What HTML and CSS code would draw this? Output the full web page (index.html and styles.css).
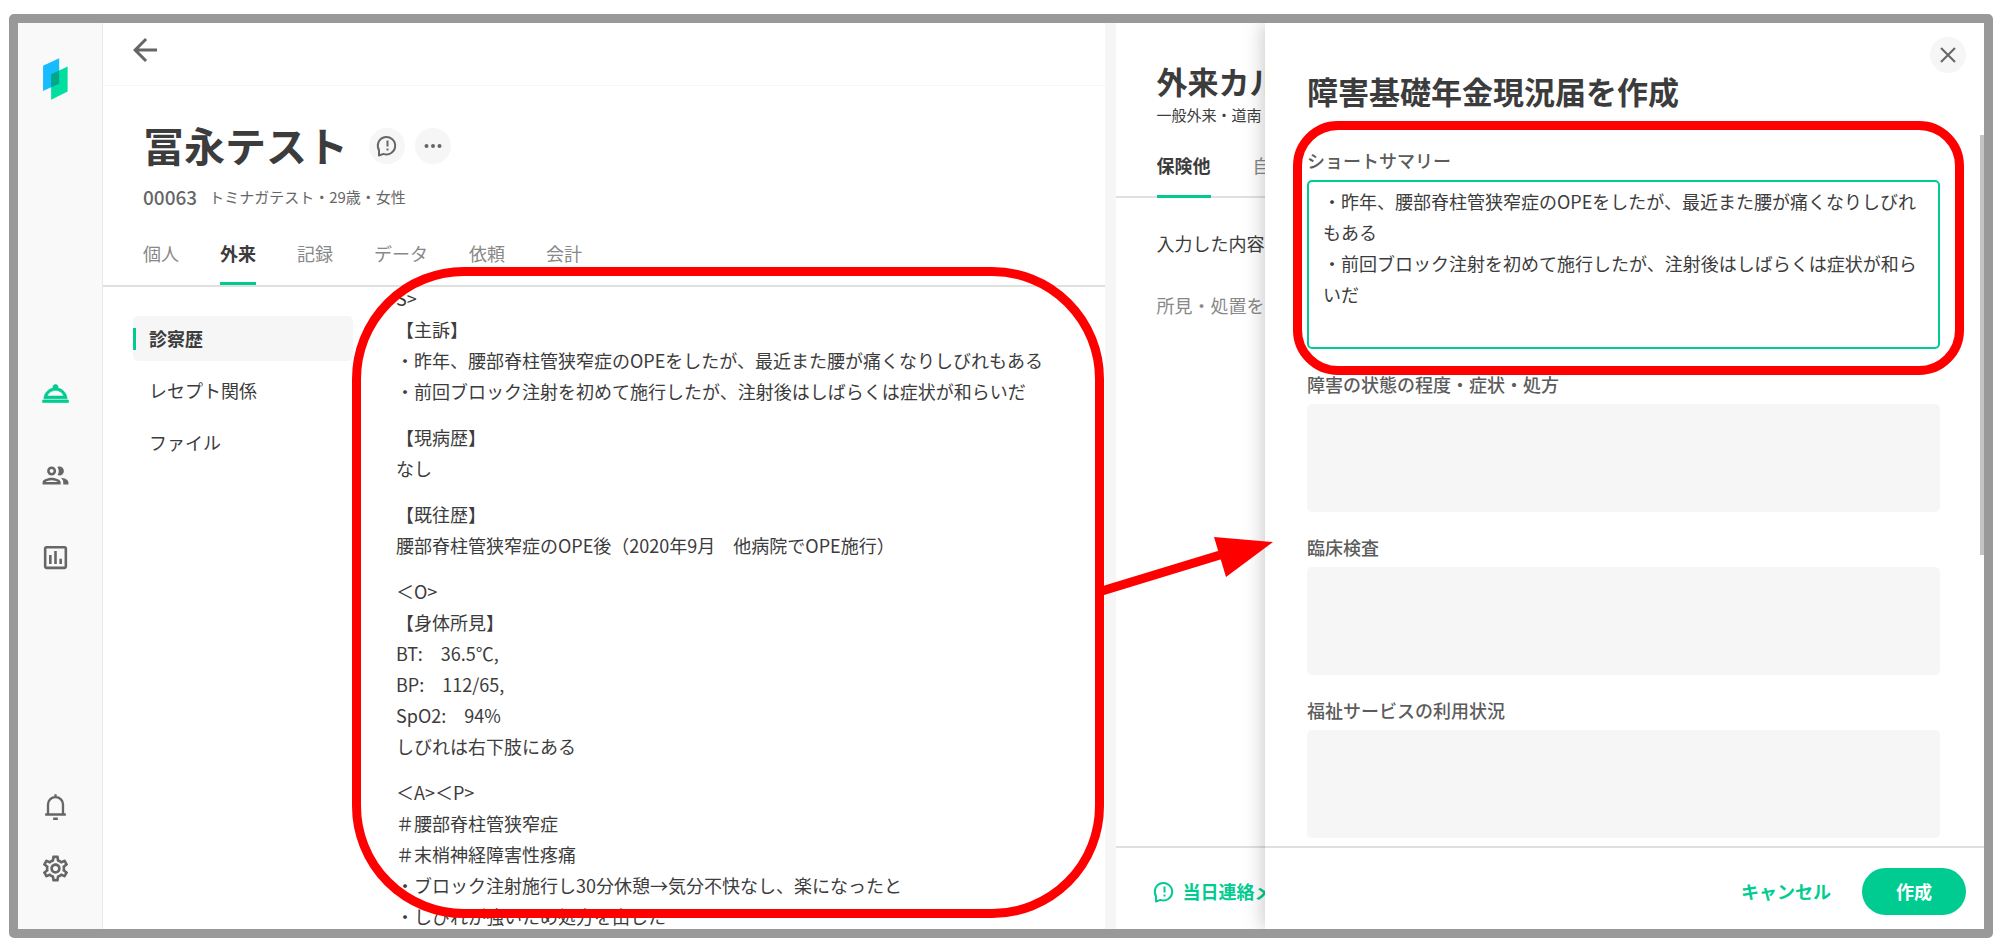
FILE: index.html
```html
<!DOCTYPE html>
<html lang="ja">
<head>
<meta charset="utf-8">
<meta name="viewport" content="width=device-width, initial-scale=1">
<title>障害基礎年金現況届を作成</title>
<link rel="stylesheet" href="styles.css">
</head>
<body>
<div class="frame">
  <nav class="rail" aria-label="メイン">
    <svg class="logo" viewBox="130 174 74 125" aria-hidden="true">
      <path fill="#15bdff" d="M130 197l48-22v75l-48 22z"/>
      <path fill="#00dfa0" d="M154 222l49-23v75l-49 24z"/>
      <path fill="#00a78b" d="M154 222l24-11v39l-24 12z"/>
    </svg>
    <div class="rail-group rail-main">
      <a class="rail-link active" href="#reception" aria-label="受付"><svg class="icon" viewBox="0 0 24 24"><path stroke="currentColor" stroke-width=".5" d="M2 17h20v2H2zm11.84-9.21c.1-.24.16-.51.16-.79 0-1.1-.9-2-2-2s-2 .9-2 2c0 .28.06.55.16.79C6.25 8.6 3.27 11.93 3 16h18c-.27-4.07-3.25-7.4-7.16-8.21zM12 9.58c2.95 0 5.47 1.83 6.5 4.41h-13c1.03-2.58 3.55-4.41 6.5-4.41z"/></svg></a>
      <a class="rail-link" href="#patients" aria-label="患者"><svg class="icon" viewBox="0 0 24 24"><path d="M9 13.75c-2.34 0-7 1.17-7 3.5V19h14v-1.75c0-2.33-4.66-3.5-7-3.5zM4.34 17c.84-.58 2.87-1.25 4.66-1.25s3.82.67 4.66 1.25H4.34zM9 12c1.93 0 3.5-1.57 3.5-3.5S10.93 5 9 5 5.5 6.57 5.5 8.5 7.07 12 9 12zm0-5c.83 0 1.5.67 1.5 1.5S9.83 10 9 10s-1.5-.67-1.5-1.5S8.17 7 9 7zm7.04 6.81c1.16.84 1.96 1.96 1.96 3.44V19h4v-1.75c0-2.02-3.5-3.17-5.96-3.44zM15 12c1.93 0 3.5-1.57 3.5-3.5S16.93 5 15 5c-.54 0-1.04.13-1.5.35.63.89 1 1.98 1 3.15s-.37 2.26-1 3.15c.46.22.96.35 1.5.35z"/></svg></a>
      <a class="rail-link" href="#report" aria-label="レポート"><svg class="icon" viewBox="0 0 24 24"><path d="M9 17H7v-7h2v7zm4 0h-2V7h2v10zm4 0h-2v-4h2v4zm2 2H5V5h14v14zm0-16H5c-1.1 0-2 .9-2 2v14c0 1.1.9 2 2 2h14c1.1 0 2-.9 2-2V5c0-1.1-.9-2-2-2z"/></svg></a>
    </div>
    <div class="rail-group rail-tools">
      <button class="rail-link" type="button" aria-label="通知"><svg class="icon line" viewBox="0 0 24 24"><path d="M4 18.2h16M6.200 18V10.500c0-3.200 2.300-5.700 5.800-5.700s5.800 2.500 5.800 5.700V18M12 2.500V5M10.200 21.500h3.600"/></svg></button>
      <button class="rail-link" type="button" aria-label="設定"><svg class="icon" viewBox="0 0 24 24"><path d="M19.43 12.98c.04-.32.07-.64.07-.98 0-.34-.03-.66-.07-.98l2.110-1.650c.19-.15.24-.42.12-.64l-2-3.460c-.09-.16-.26-.25-.44-.25-.06 0-.12.01-.17.03l-2.490 1c-.52-.4-1.080-.73-1.690-.98l-.38-2.650C14.46 2.18 14.25 2 14 2h-4c-.25 0-.46.18-.49.42l-.38 2.650c-.61.25-1.170.59-1.690.98l-2.490-1c-.06-.02-.12-.03-.18-.03-.17 0-.34.09-.43.25l-2 3.460c-.13.22-.07.49.12.64l2.110 1.650c-.04.32-.07.65-.07.98 0 .33.03.66.07.98l-2.110 1.650c-.19.15-.24.42-.12.64l2 3.460c.09.16.26.25.44.25.06 0 .12-.01.17-.03l2.490-1c.52.4 1.080.73 1.690.98l.38 2.650c.03.24.24.42.49.42h4c.25 0 .46-.18.49-.42l.38-2.650c.61-.25 1.170-.59 1.690-.98l2.490 1c.06.02.12.03.18.03.17 0 .34-.09.43-.25l2-3.460c.12-.22.07-.49-.12-.64l-2.110-1.650zm-1.980-1.710c.04.31.05.52.05.73 0 .21-.02.43-.05.73l-.14 1.130.89.7 1.080.84-.7 1.210-1.270-.51-1.040-.42-.9.68c-.43.32-.84.56-1.250.73l-1.060.43-.16 1.130-.2 1.350h-1.400l-.19-1.350-.16-1.130-1.060-.43c-.43-.18-.83-.41-1.230-.71l-.91-.7-1.060.43-1.270.51-.7-1.210 1.080-.84.89-.7-.14-1.130c-.03-.31-.05-.54-.05-.74s.02-.43.05-.73l.14-1.130-.89-.7-1.080-.84.7-1.210 1.270.51 1.040.42.9-.68c.43-.32.84-.56 1.250-.73l1.060-.43.16-1.130.2-1.350h1.390l.19 1.350.16 1.130 1.060.43c.43.18.83.41 1.230.71l.91.7 1.060-.43 1.270-.51.7 1.210-1.070.85-.89.7.14 1.130zM12 8c-2.210 0-4 1.790-4 4s1.790 4 4 4 4-1.790 4-4-1.790-4-4-4zm0 6c-1.100 0-2-.9-2-2s.9-2 2-2 2 .9 2 2-.9 2-2 2z"/></svg></button>
    </div>
  </nav>

  <main class="patient">
    <header class="topbar">
      <button class="back" type="button" aria-label="戻る"><svg viewBox="0 0 24 24"><path d="M20 11H7.830l5.590-5.590L12 4l-8 8 8 8 1.410-1.410L7.830 13H20v-2z"/></svg></button>
    </header>
    <section class="patient-head">
      <div class="name-row">
        <h1>冨永テスト</h1>
        <div class="name-actions">
          <button class="round" type="button" aria-label="連絡メモ"><svg class="bubble" viewBox="0 0 24 24"><path d="M4 21.500V16.200A8.700 8.700 0 1 1 8.500 19.900Z"/><path d="M12.500 6.500v6M12.500 14.500v2"/></svg></button>
          <button class="round" type="button" aria-label="その他"><svg class="dots" viewBox="0 0 18 6"><circle cx="2.500" cy="3" r="2"/><circle cx="9" cy="3" r="2"/><circle cx="15.500" cy="3" r="2"/></svg></button>
        </div>
      </div>
      <p class="meta"><span class="pid">00063</span><span>トミナガテスト・29歳・女性</span></p>
    </section>
    <nav class="tabs" aria-label="患者情報">
      <a href="#personal">個人</a><a class="active" href="#outpatient">外来</a><a href="#record">記録</a><a href="#data">データ</a><a href="#order">依頼</a><a href="#account">会計</a>
    </nav>
    <div class="chart">
      <nav class="menu" aria-label="外来">
        <a class="active" href="#history">診察歴</a>
        <a href="#receipt">レセプト関係</a>
        <a href="#files">ファイル</a>
      </nav>
      <article class="note">
        <p>S&gt;<br>【主訴】<br>・昨年、腰部脊柱管狭窄症のOPEをしたが、最近また腰が痛くなりしびれもある<br>・前回ブロック注射を初めて施行したが、注射後はしばらくは症状が和らいだ</p>
        <p>【現病歴】<br>なし</p>
        <p>【既往歴】<br>腰部脊柱管狭窄症のOPE後（2020年9月　他病院でOPE施行）</p>
        <p>＜O&gt;<br>【身体所見】<br>BT:　36.5℃,<br>BP:　112/65,<br>SpO2:　94%<br>しびれは右下肢にある</p>
        <p>＜A&gt;＜P&gt;<br>＃腰部脊柱管狭窄症<br>＃末梢神経障害性疼痛<br>・ブロック注射施行し30分休憩→気分不快なし、楽になったと<br>・しびれが強いため処方を出した</p>
      </article>
    </div>
    <div class="mark mark-note"></div>
  </main>

  <section class="karte">
    <h2>外来カルテ</h2>
    <p class="karte-sub">一般外来・道南</p>
    <nav class="karte-tabs" aria-label="カルテ"><a class="active" href="#insured">保険他</a><a href="#self">自費</a></nav>
    <div class="karte-body">
      <p>入力した内容</p>
      <p class="hint">所見・処置を</p>
    </div>
    <footer class="karte-foot">
      <button type="button"><svg class="bubble" viewBox="0 0 24 24"><path d="M4 21.500V16.200A8.700 8.700 0 1 1 8.500 19.900Z"/><path d="M12.500 6.500v6M12.500 14.500v2"/></svg>当日連絡メモ</button>
    </footer>
  </section>

  <aside class="drawer" aria-labelledby="drawer-title">
    <header class="drawer-head">
      <h2 id="drawer-title">障害基礎年金現況届を作成</h2>
      <button class="round close" type="button" aria-label="閉じる"><svg viewBox="0 0 16 16"><path d="M1 1l14 14M15 1L1 15"/></svg></button>
    </header>
    <form class="drawer-body">
      <div class="field focus">
        <label for="summary">ショートサマリー</label>
        <textarea id="summary">・昨年、腰部脊柱管狭窄症のOPEをしたが、最近また腰が痛くなりしびれもある
・前回ブロック注射を初めて施行したが、注射後はしばらくは症状が和らいだ</textarea>
        <div class="mark mark-field"></div>
      </div>
      <div class="field"><label for="state">障害の状態の程度・症状・処方</label><textarea id="state"></textarea></div>
      <div class="field"><label for="exam">臨床検査</label><textarea id="exam"></textarea></div>
      <div class="field"><label for="welfare">福祉サービスの利用状況</label><textarea id="welfare"></textarea></div>
      <div class="thumb"></div>
    </form>
    <footer class="drawer-foot">
      <button class="cancel" type="button">キャンセル</button>
      <button class="submit" type="button">作成</button>
    </footer>
  </aside>

  <svg class="arrow" viewBox="0 0 172 60" aria-hidden="true"><path d="M0 54l118-36" stroke="#f00" stroke-width="9"/><path fill="#f00" d="M112 0l59 5-47 35z"/></svg>
</div>
</body>
</html>
```

FILE: styles.css
```css
:root {
  --green: #00cc92;
  --ink: #3c3c3c;
  --mid: #666;
  --soft: #888;
  --fill: #f6f6f6;
  --rule: #e0e0e0;
}

* { box-sizing: border-box; }

body {
  margin: 0;
  height: 100vh;
  padding: 14px 7px 7px 9px;
  background: #fff;
  color: var(--ink);
  font: 18px/31px "Noto Sans CJK JP", sans-serif;
}

h1, h2, p { margin: 0; }
a { color: inherit; text-decoration: none; }
button {
  padding: 0;
  border: 0;
  background: none;
  color: inherit;
  font: inherit;
  cursor: pointer;
}
svg { display: block; }

.frame {
  position: relative;
  display: flex;
  height: 100%;
  overflow: hidden;
  border: 9px solid #999;
  border-radius: 5px;
}

/* Left rail */
.rail {
  flex: none;
  display: flex;
  flex-direction: column;
  align-items: center;
  width: 85px;
  padding: 35px 10px 45px 0;
  border-right: 1px solid #e8e8e8;
  background: #f9f9f9;
  color: var(--mid);
}
.logo { width: 25px; height: 42px; }
.rail-group { display: flex; flex-direction: column; }
.rail-main { gap: 51px; margin-top: 278px; }
.rail-tools { gap: 31px; margin-top: auto; }
.rail-link.active { color: var(--green); }
.icon { width: 31px; height: 31px; fill: currentColor; }
.icon.line { fill: none; stroke: currentColor; stroke-width: 1.8; }

/* Patient pane */
.patient {
  position: relative;
  flex: 1001 1 0;
  display: flex;
  flex-direction: column;
  min-width: 0;
}
.topbar {
  flex: none;
  height: 63px;
  padding: 9px 24px;
  border-bottom: 1px solid #f6f6f6;
}
.back svg { width: 36px; height: 36px; fill: var(--mid); }
.patient-head { padding: 30px 40px 0; }
.name-row { display: flex; align-items: center; gap: 21px; }
h1 {
  padding-bottom: 3px;
  font-size: 41px;
  line-height: 57px;
  font-weight: 700;
}
.name-actions { display: flex; gap: 10px; }
.round {
  display: grid;
  place-items: center;
  width: 36px;
  height: 36px;
  border-radius: 50%;
  background: var(--fill);
  color: var(--mid);
}
.bubble {
  width: 24px;
  height: 24px;
  fill: none;
  stroke: currentColor;
  stroke-width: 2;
  stroke-linejoin: round;
}
.dots { width: 18px; height: 6px; fill: var(--mid); }
.meta {
  display: flex;
  align-items: center;
  gap: 12px;
  margin-top: 5px;
  font-size: 15px;
  color: var(--mid);
}
.pid { font-size: 19px; font-weight: 500; }

.tabs {
  flex: none;
  display: flex;
  gap: 41px;
  height: 75px;
  padding: 0 40px;
  border-bottom: 2px solid var(--rule);
  color: var(--soft);
}
.tabs a { padding-top: 26px; }
.tabs .active {
  border-bottom: 3px solid var(--green);
  color: var(--ink);
  font-weight: 700;
}

.chart {
  flex: 1;
  display: flex;
  gap: 43px;
  min-height: 0;
  overflow: hidden;
  padding-left: 30px;
}
.menu {
  flex: none;
  display: flex;
  flex-direction: column;
  gap: 7px;
  width: 220px;
  padding-top: 29px;
}
.menu a {
  display: flex;
  align-items: center;
  height: 45px;
  padding-left: 16px;
  border-radius: 5px;
}
.menu .active {
  padding-left: 0;
  background: var(--fill);
  font-weight: 700;
}
.menu .active::before {
  content: "";
  width: 3px;
  height: 22px;
  margin-right: 13px;
  background: var(--green);
}
.note { flex: 1; margin-top: -4px; white-space: nowrap; }
.note p + p { margin-top: 15px; }

/* Record pane */
.karte {
  flex: 868 1 0;
  display: flex;
  flex-direction: column;
  min-width: 0;
  border-left: 11px solid var(--fill);
}
.karte h2, .drawer h2 { font-size: 31px; line-height: 46px; font-weight: 700; }
.karte h2 { padding: 35px 41px 0; }
.karte-sub { padding: 0 41px; font-size: 15px; line-height: 22px; }
.karte-tabs {
  display: flex;
  gap: 42px;
  height: 72px;
  padding: 0 41px;
  border-bottom: 2px solid var(--rule);
  color: var(--soft);
}
.karte-tabs a { height: 72px; padding-top: 24px; }
.karte-tabs .active {
  border-bottom: 3px solid var(--green);
  color: var(--ink);
  font-weight: 700;
}
.karte-body {
  flex: 1;
  display: flex;
  flex-direction: column;
  gap: 31px;
  padding: 30px 41px 0;
}
.hint { color: var(--soft); }
.karte-foot, .drawer-foot {
  flex: none;
  display: flex;
  align-items: center;
  height: 83px;
  border-top: 2px solid var(--rule);
}
.karte-foot { padding: 6px 36px 0; }
.karte-foot button {
  display: flex;
  align-items: center;
  gap: 7px;
  color: var(--green);
  font-weight: 700;
}

/* Form drawer */
.drawer {
  position: absolute;
  top: 0;
  right: 0;
  bottom: 0;
  display: flex;
  flex-direction: column;
  width: 719px;
  background: #fff;
  box-shadow: 0 0 20px rgba(0, 0, 0, .25);
}
.drawer-head {
  flex: none;
  display: flex;
  justify-content: space-between;
  height: 94px;
  padding: 14px 18px 0 42px;
}
.drawer-head h2 { padding-top: 31px; }
.close svg {
  width: 16px;
  height: 16px;
  fill: none;
  stroke: var(--mid);
  stroke-width: 2;
}
.drawer-body {
  position: relative;
  flex: 1;
  display: flex;
  flex-direction: column;
  gap: 22px;
  min-height: 0;
  overflow: hidden;
  padding: 30px 44px 0 42px;
}
.field {
  position: relative;
  flex: none;
  display: flex;
  flex-direction: column;
  gap: 7px;
}
.field label {
  font-family: "Noto Sans CJK JP Medium", "Noto Sans CJK JP", sans-serif;
  line-height: 26px;
  font-weight: 500;
  color: #5c5c5c;
}
.field textarea {
  display: block;
  width: 100%;
  height: 108px;
  margin: 0;
  padding: 4px 14px;
  border: 2px solid transparent;
  border-radius: 5px;
  outline: 0;
  background: var(--fill);
  color: var(--ink);
  font: inherit;
  resize: none;
  overflow: hidden;
}
.focus textarea {
  height: 169px;
  border-color: var(--green);
  background: #fff;
}
.thumb {
  position: absolute;
  top: 18px;
  right: 0;
  width: 4px;
  height: 420px;
  background: #c4c4c4;
}
.drawer-foot {
  justify-content: flex-end;
  gap: 31px;
  padding: 6px 18px 0;
  font-weight: 700;
}
.drawer-foot button { font-weight: 700; }
.cancel { color: var(--green); }
.submit {
  width: 104px;
  height: 47px;
  border-radius: 24px;
  background: var(--green);
  color: #fff;
}

/* Red annotations */
.mark {
  position: absolute;
  border: 9px solid #f00;
  pointer-events: none;
}
.mark-note { inset: 244px 1px 11px 249px; border-radius: 112px; }
.mark-field { inset: -26px -24px -26px -14px; border-radius: 45px; }
.arrow {
  position: absolute;
  top: 514px;
  left: 1084px;
  width: 172px;
  height: 60px;
  pointer-events: none;
}
```
